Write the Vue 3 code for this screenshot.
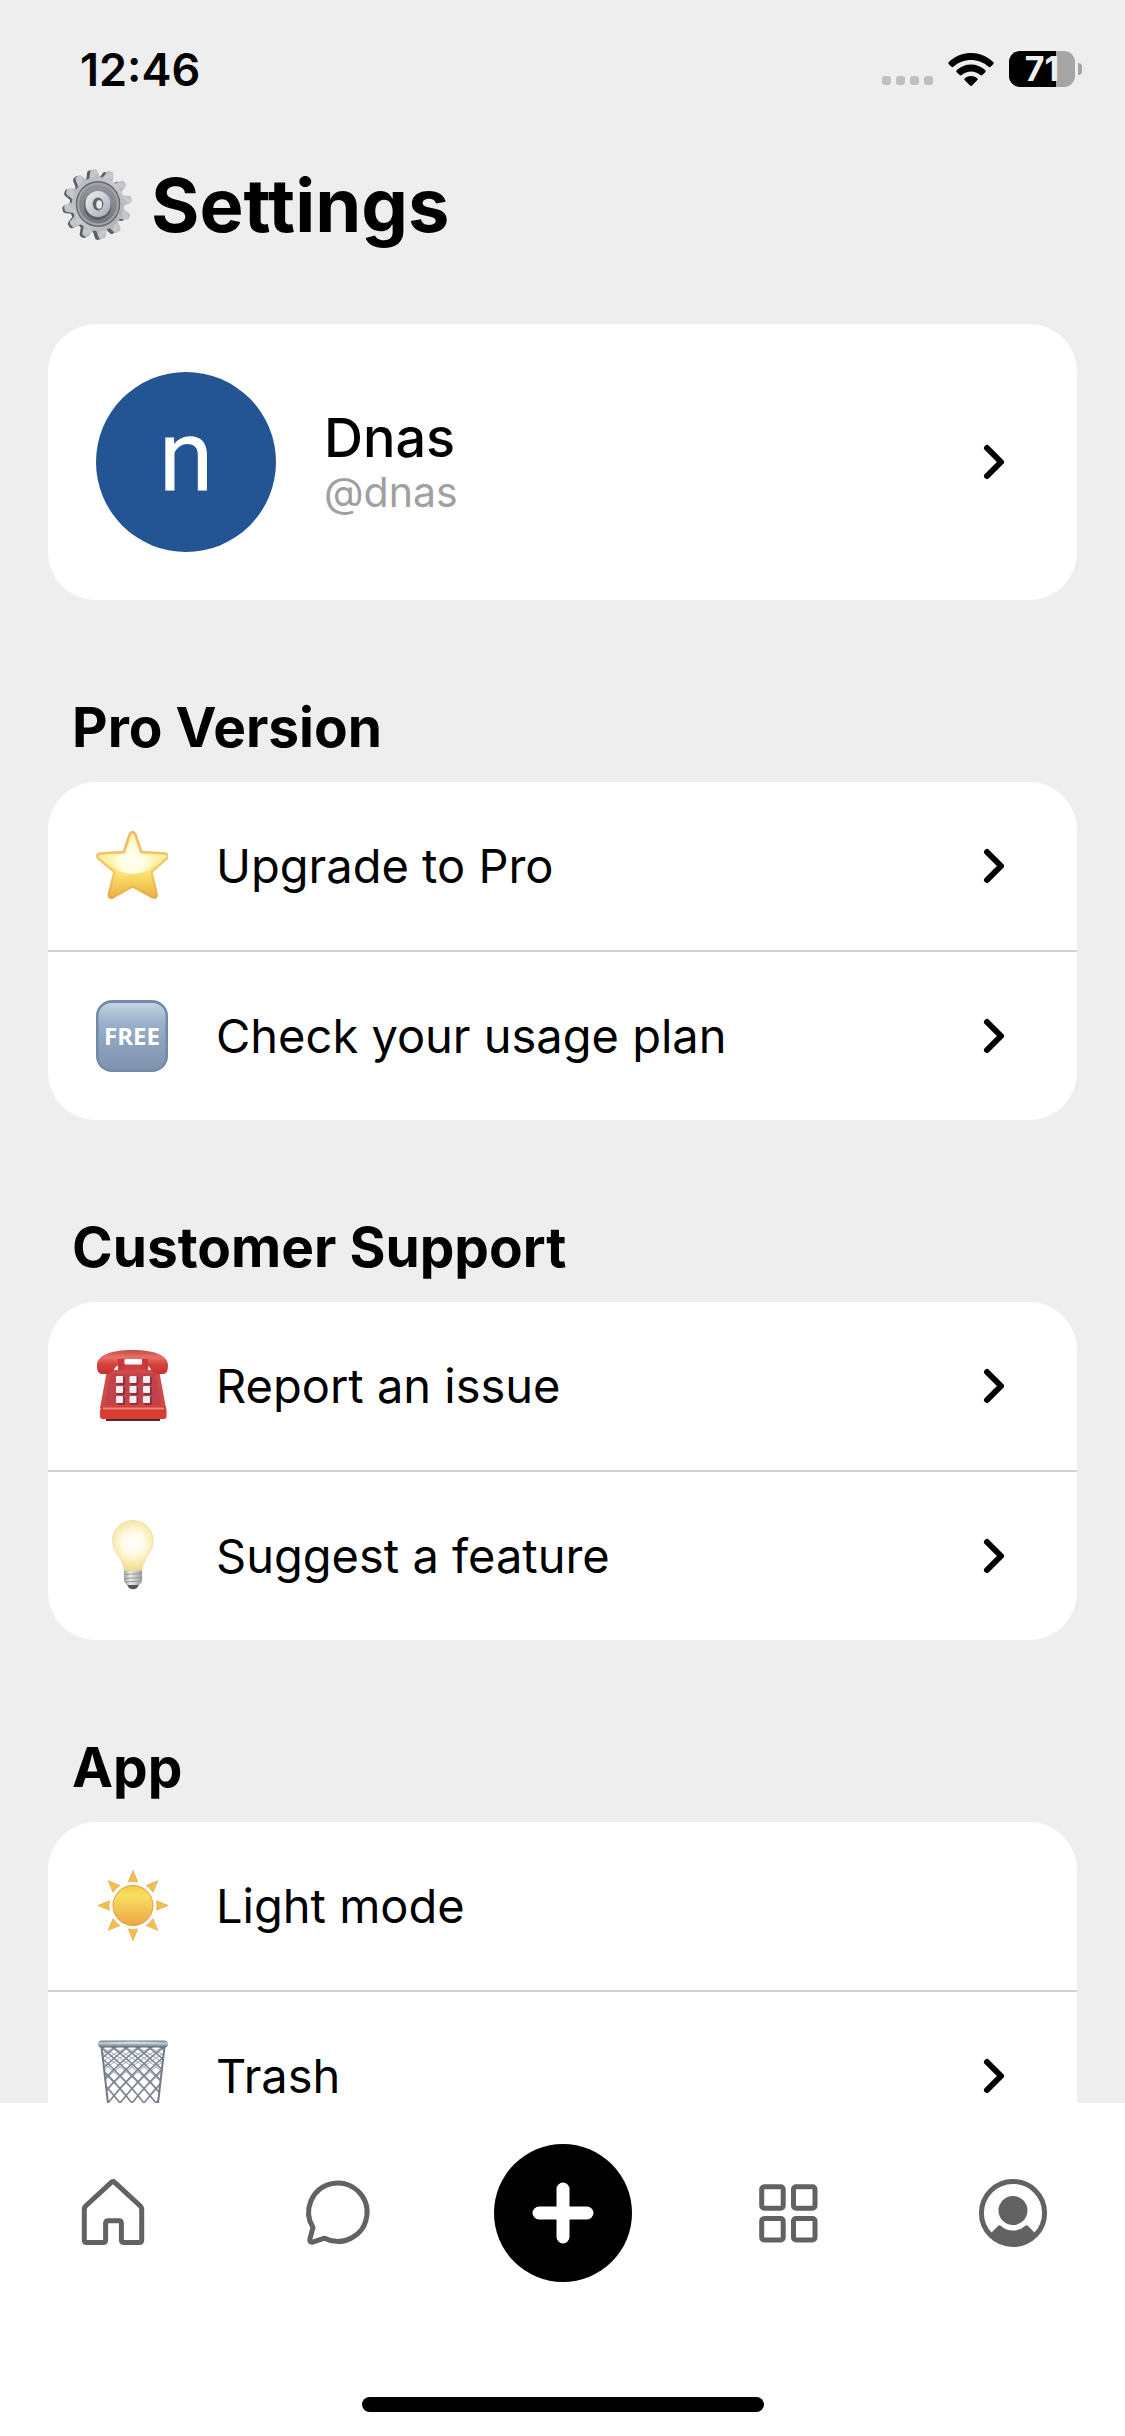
<template>
  <div class="screen">
    <!-- status bar -->
    <header class="status-bar">
      <time class="clock">12:46</time>
      <div class="status-icons">
        <div class="signal">
          <span v-for="n in 4" :key="n" class="signal-dot"></span>
        </div>
        <svg class="wifi" viewBox="0 0 46 33" aria-label="Wi-Fi">
          <path d="M0.8 11.2Q-0.3 10 0.9 8.9C13-3 33-3 45.1 8.9Q46.3 10 45.2 11.2L42.6 13.8Q41.6 14.7 40.6 13.8C31 4.7 15 4.7 5.4 13.8Q4.4 14.7 3.4 13.8Z" />
          <path d="M8.7 19.2Q7.7 18.1 8.8 17.1C16.5 9.5 29.5 9.5 37.2 17.1Q38.3 18.1 37.3 19.2L34.4 22Q33.4 22.9 32.3 22C27 17.2 19 17.2 13.7 22Q12.6 22.9 11.6 22Z" />
          <path d="M16.8 27.3Q15.7 26.2 16.9 25.2C20.4 22.3 25.6 22.3 29.1 25.2Q30.3 26.2 29.2 27.3L24 32.5Q23 33.4 22 32.5Z" />
        </svg>
        <div class="battery">
          <span class="battery-body">{{ battery }}</span>
          <span class="battery-cap"></span>
        </div>
      </div>
    </header>

    <!-- content -->
    <main class="content">
      <div class="page-title">
        <svg class="emoji" viewBox="0 0 72 72" aria-hidden="true">
          <defs>
            <linearGradient id="gearFace" x1="0" y1="0" x2="1" y2="1">
              <stop offset="0" stop-color="#aeb6c0" />
              <stop offset="0.5" stop-color="#c9cacd" />
              <stop offset="1" stop-color="#a9aaae" />
            </linearGradient>
            <linearGradient id="gearDish" x1="0" y1="0" x2="0" y2="1">
              <stop offset="0" stop-color="#92969c" />
              <stop offset="1" stop-color="#75777b" />
            </linearGradient>
            <linearGradient id="gearHub" x1="0" y1="0" x2="1" y2="1">
              <stop offset="0" stop-color="#f0f2f6" />
              <stop offset="1" stop-color="#a2a8b3" />
            </linearGradient>
          </defs>
          <g fill="#5c5e62" transform="translate(33.5 36) scale(0.92 1)">
            <path v-for="n in 12" :key="n" :transform="`rotate(${n * 30 - 8})`" d="M-6 -24L-3.5 -33Q-3 -35 -1 -35L1.5 -35Q3.5 -35 4 -33L6 -24Z" />
            <circle r="27" />
          </g>
          <g transform="translate(37 35) scale(0.97 1)">
            <path v-for="n in 12" :key="n" fill="url(#gearFace)" :transform="`rotate(${n * 30 - 8})`" d="M-6 -24L-3.5 -33Q-3 -35 -1 -35L1.5 -35Q3.5 -35 4 -33L6 -24Z" />
            <circle r="27" fill="url(#gearFace)" />
            <circle r="23" fill="#64676c" />
            <circle r="21.5" fill="#a3a6aa" />
            <circle r="19.5" fill="url(#gearDish)" />
            <circle cx="-0.5" cy="2" r="14" fill="#5d5f63" />
            <circle r="13" fill="url(#gearHub)" />
            <ellipse rx="5.5" ry="6.5" fill="#66645f" />
            <ellipse cx="1.2" cy="0.5" rx="3" ry="4.2" fill="#e9eaec" />
          </g>
        </svg>
        <h1>Settings</h1>
      </div>

      <button type="button" class="card profile">
        <span class="avatar">n</span>
        <span class="profile-text">
          <span class="profile-name">Dnas</span>
          <span class="profile-handle">@dnas</span>
        </span>
        <svg class="chevron" viewBox="0 0 72 72" aria-hidden="true"><path d="M30 22L44 36L30 50" /></svg>
      </button>

      <section v-for="section in sections" :key="section.title" class="section">
        <h2>{{ section.title }}</h2>
        <div class="card">
          <button v-for="item in section.items" :key="item.label" type="button" class="row">
            <svg v-if="item.icon === 'star'" class="emoji" viewBox="0 0 72 72" aria-hidden="true">
              <defs>
                <linearGradient id="starFill" x1="0" y1="0" x2="0" y2="1">
                  <stop offset="0" stop-color="#fff0b8" />
                  <stop offset="0.5" stop-color="#fdf0a0" />
                  <stop offset="0.7" stop-color="#f8d964" />
                  <stop offset="1" stop-color="#eeb03f" />
                </linearGradient>
                <linearGradient id="starEdge" x1="0" y1="0" x2="0" y2="1">
                  <stop offset="0" stop-color="#eeb766" />
                  <stop offset="0.6" stop-color="#f2cc68" />
                  <stop offset="1" stop-color="#e6aa48" />
                </linearGradient>
                <radialGradient id="starGlow" gradientUnits="userSpaceOnUse" cx="36.5" cy="29" r="27">
                  <stop offset="0" stop-color="#fffff4" />
                  <stop offset="0.5" stop-color="#fffee0" />
                  <stop offset="1" stop-color="#fff8b0" stop-opacity="0" />
                </radialGradient>
              </defs>
              <path d="M33.8 4Q36.5 0 39.2 4L45.5 22L69 23.5Q74.5 25 70.5 28.5L55.5 42L60.5 63.5Q61 69.5 56 67L36.5 56.5L17.5 67Q12 69.5 13 63.5L18.5 42L2.5 28.5Q-1 25 4 23.5L27.8 22Z" fill="url(#starFill)" stroke="url(#starEdge)" stroke-width="2.5" stroke-linejoin="round" />
              <path d="M36.5 6L44 24.5L66 26.5L52 40Q36 48 21.5 40L7.5 26.5L29 24.5Z" fill="url(#starGlow)" />
            </svg>

            <svg v-else-if="item.icon === 'free'" class="emoji" viewBox="0 0 72 72" aria-hidden="true">
              <defs>
                <linearGradient id="freeFill" x1="0" y1="0" x2="0" y2="1">
                  <stop offset="0" stop-color="#c3d4e4" />
                  <stop offset="0.3" stop-color="#98b0c9" />
                  <stop offset="1" stop-color="#7e92ad" />
                </linearGradient>
              </defs>
              <rect width="72" height="72" rx="16" fill="#7389a5" />
              <rect x="2.5" y="3" width="67" height="67" rx="13" fill="url(#freeFill)" />
              <text x="36" y="45" class="free-text">FREE</text>
            </svg>

            <svg v-else-if="item.icon === 'phone'" class="emoji" viewBox="0 0 72 72" aria-hidden="true">
              <defs>
                <linearGradient id="phoneTop" x1="0" y1="0" x2="0" y2="1">
                  <stop offset="0" stop-color="#c04a46" />
                  <stop offset="0.3" stop-color="#e8716a" />
                  <stop offset="0.6" stop-color="#d8403a" />
                  <stop offset="1" stop-color="#c43331" />
                </linearGradient>
              </defs>
              <path d="M10 67H64V71H10Z" fill="#50292c" />
              <path d="M14 20H60Q63 20 63.5 23L70 58H4L10.5 23Q11 20 14 20Z" fill="#d04a4a" />
              <path d="M15 23.5H59.5L65.5 55H8.5Z" fill="#c2424b" />
              <path d="M6 56H69Q71 58 70.5 67Q70 69 68 69H6.5Q4 69 4 66Q3.5 58 6 56Z" fill="#da3c34" />
              <path d="M7 58.5H68" stroke="#ee837a" stroke-width="2" />
              <path d="M22 7H52V20H22Z" fill="#cc4041" />
              <path d="M1 15C1 5 16 0 36.5 0S72 5 72 15C72 20 71 24 67 24H61C55 24 55 15 49 15H24C18 15 18 24 12 24H6C2 24 1 20 1 15Z" fill="url(#phoneTop)" />
              <path d="M22 9H28V19H22ZM46 9H52V19H46Z" fill="#c9373a" />
              <rect x="28.5" y="9" width="17.5" height="5.5" rx="1.5" fill="#fff" />
              <g v-for="y in [26, 36, 46]" :key="y">
                <rect v-for="x in [20, 33.5, 47]" :key="x" :x="x + 1" :y="y + 1" width="8" height="8" rx="1" fill="#8c323d" />
                <rect v-for="x in [20, 33.5, 47]" :key="x + 'k'" :x="x" :y="y" width="7" height="7" rx="1" fill="#f5eef1" />
              </g>
            </svg>

            <svg v-else-if="item.icon === 'bulb'" class="emoji" viewBox="0 0 72 72" aria-hidden="true">
              <defs>
                <radialGradient id="bulbFill" gradientUnits="userSpaceOnUse" cx="37" cy="23" r="27">
                  <stop offset="0" stop-color="#ffffff" />
                  <stop offset="0.4" stop-color="#fffbe8" />
                  <stop offset="0.75" stop-color="#f8eab0" />
                  <stop offset="1" stop-color="#efdc95" />
                </radialGradient>
                <linearGradient id="bulbBase" x1="0" y1="0" x2="1" y2="0">
                  <stop offset="0" stop-color="#a2a2a2" />
                  <stop offset="0.35" stop-color="#ececec" />
                  <stop offset="1" stop-color="#9c9c9c" />
                </linearGradient>
              </defs>
              <path d="M30 63H44L41 68Q37 70.5 33 68Z" fill="#555" />
              <path d="M28 50H46V61Q45 65 41 65H33Q29 65 28 61Z" fill="url(#bulbBase)" />
              <path d="M28 54.5L46 53.5M28 58.5L46 57.5M29 62L45 61" stroke="#999" stroke-width="1" />
              <path d="M36.7 0.5C48.5 0.5 57.2 9.5 57.2 20.5C57.2 32 47 38 46 50Q37 52 28 50C27 38 16.5 32 16.5 20.5C16.5 9.5 25 0.5 36.7 0.5Z" fill="url(#bulbFill)" stroke="#ecd98c" stroke-width="0.7" />
            </svg>

            <svg v-else-if="item.icon === 'sun'" class="emoji" viewBox="0 0 72 72" aria-hidden="true">
              <defs>
                <linearGradient id="sunFill" x1="0" y1="0" x2="0" y2="1">
                  <stop offset="0" stop-color="#f5cb47" />
                  <stop offset="0.25" stop-color="#fade62" />
                  <stop offset="1" stop-color="#eda644" />
                </linearGradient>
              </defs>
              <path v-for="n in 8" :key="n" d="M-4.7 -23.5L0 -35L4.7 -23.5Q0 -24.8 -4.7 -23.5Z" :transform="`translate(37 35.5) rotate(${n * 45})`" fill="#f2c04a" stroke="#e5ad50" stroke-width="0.8" />
              <circle cx="37" cy="35.5" r="20" fill="url(#sunFill)" stroke="#e59a3f" stroke-width="1" />
            </svg>

            <svg v-else class="emoji" viewBox="0 0 72 72" aria-hidden="true">
              <defs>
                <clipPath id="binShape"><path d="M5 6H69L61 72H13Z" /></clipPath>
                <linearGradient id="binRim" x1="0" y1="0" x2="0" y2="1">
                  <stop offset="0" stop-color="#737c87" />
                  <stop offset="0.4" stop-color="#bdcedb" />
                  <stop offset="1" stop-color="#5f656e" />
                </linearGradient>
              </defs>
              <g clip-path="url(#binShape)" fill="none">
                <!-- back mesh -->
                <g stroke="#b4bccb" stroke-width="1.3">
                  <path v-for="n in 14" :key="'a' + n" :d="`M${n * 12 - 98} 4Q${n * 12 - 46} 26 ${n * 12 - 6} 88`" />
                  <path v-for="n in 14" :key="'b' + n" :d="`M${n * 12 + 2} 4Q${n * 12 - 50} 26 ${n * 12 - 90} 88`" />
                </g>
                <!-- front mesh -->
                <g stroke="#7d838e" stroke-width="1.5">
                  <path v-for="n in 14" :key="'c' + n" :d="`M${n * 12 - 92} -2Q${n * 12 - 40} 34 ${n * 12 - 4} 92`" />
                  <path v-for="n in 14" :key="'d' + n" :d="`M${n * 12 - 4} -2Q${n * 12 - 56} 34 ${n * 12 - 92} 92`" />
                </g>
              </g>
              <path d="M5.5 7L13 72M68.5 7L61 72" stroke="#747b88" stroke-width="2" fill="none" />
              <rect x="2" y="0.5" width="70" height="7" rx="3.5" fill="url(#binRim)" />
              <path d="M6 3Q37 0 68 3Q37 5 6 3Z" fill="#c5d8e6" />
            </svg>

            <span class="row-label">{{ item.label }}</span>
            <svg v-if="item.link" class="chevron" viewBox="0 0 72 72" aria-hidden="true"><path d="M30 22L44 36L30 50" /></svg>
          </button>
        </div>
      </section>
    </main>

    <!-- tab bar -->
    <footer class="tab-bar">
      <nav class="tabs">
        <button type="button" class="tab" aria-label="Home">
          <svg class="tab-icon" viewBox="0 0 72 72">
            <path d="M7.3 32.5Q7.3 30.5 8.7 29L34.3 5.3Q36 3.8 37.7 5.3L63.3 29Q64.7 30.5 64.7 32.5V63Q64.7 65.5 62.2 65.5H46.9Q44.4 65.5 44.4 63V46.5Q44.4 43.8 41.9 43.8H31.1Q28.6 43.8 28.6 46.5V63Q28.6 65.5 26.1 65.5H9.8Q7.3 65.5 7.3 63Z" />
          </svg>
        </button>
        <button type="button" class="tab" aria-label="Chats">
          <svg class="tab-icon" viewBox="0 0 72 72">
            <path d="M11 50.5A29.2 29.2 0 1 1 22.6 61.2L10.5 65.2Q7.3 65.5 7.8 62.2Z" />
          </svg>
        </button>
        <button type="button" class="tab" aria-label="Add">
          <span class="add">
            <svg class="tab-icon add-icon" viewBox="0 0 72 72"><path d="M36 12V60M12 36H60" /></svg>
          </span>
        </button>
        <button type="button" class="tab" aria-label="Spaces">
          <svg class="tab-icon" viewBox="0 0 72 72">
            <rect x="9.7" y="9.7" width="21.5" height="21.5" rx="2.5" />
            <rect x="41.5" y="9.7" width="21.5" height="21.5" rx="2.5" />
            <rect x="9.7" y="41.5" width="21.5" height="21.5" rx="2.5" />
            <rect x="41.5" y="41.5" width="21.5" height="21.5" rx="2.5" />
          </svg>
        </button>
        <button type="button" class="tab" aria-label="Profile">
          <svg class="tab-icon" viewBox="0 0 72 72">
            <circle cx="36" cy="36" r="31.6" />
            <circle class="solid" cx="36" cy="33.5" r="14.5" />
            <path class="solid" d="M13.5 56.5L21.5 48.5Q22.7 47.6 24 49Q29 53.6 36 53.6T48 49Q49.3 47.6 50.5 48.5L58.5 56.5Q50 68 36 68T13.5 56.5Z" />
          </svg>
        </button>
      </nav>
      <div class="home-indicator"></div>
    </footer>
  </div>
</template>

<script setup>
import { ref } from 'vue'

const battery = ref(71)

const sections = [
  {
    title: 'Pro Version',
    items: [
      { icon: 'star', label: 'Upgrade to Pro', link: true },
      { icon: 'free', label: 'Check your usage plan', link: true }
    ]
  },
  {
    title: 'Customer Support',
    items: [
      { icon: 'phone', label: 'Report an issue', link: true },
      { icon: 'bulb', label: 'Suggest a feature', link: true }
    ]
  },
  {
    title: 'App',
    items: [
      { icon: 'sun', label: 'Light mode', link: false },
      { icon: 'trash', label: 'Trash', link: true }
    ]
  }
]
</script>

<style>
body {
  margin: 0;
  background: #eee;
}
</style>

<style scoped>
.screen {
  display: flex;
  flex-direction: column;
  height: 100vh;
  background: #eee;
  color: #000;
  font-family: Inter, "Liberation Sans", sans-serif;
}

button {
  border: 0;
  padding: 0;
  margin: 0;
  background: none;
  color: inherit;
  font: inherit;
  text-align: left;
  cursor: pointer;
}

/* status bar */
.status-bar {
  display: flex;
  flex: none;
  align-items: center;
  justify-content: space-between;
  height: 138px;
  padding: 0 43px 0 80px;
  box-sizing: border-box;
}

.clock {
  font-size: 45px;
  font-weight: 600;
}

.status-icons {
  display: flex;
  align-items: center;
  gap: 15px;
}

.signal {
  display: flex;
  align-self: flex-end;
  gap: 5px;
  padding-bottom: 2px;
}

.signal-dot {
  width: 9px;
  height: 9px;
  border-radius: 3px;
  background: #bfbfbf;
}

.wifi {
  width: 46px;
  height: 33px;
}

.battery {
  display: flex;
  align-items: center;
  gap: 3px;
}

.battery-body {
  width: 66px;
  height: 36px;
  border-radius: 11px;
  background: linear-gradient(90deg, #000 71%, #a5a5a5 71%);
  color: #eee;
  font-size: 34px;
  font-weight: 700;
  line-height: 36px;
  text-align: center;
}

.battery-cap {
  width: 4px;
  height: 12px;
  border-radius: 0 6px 6px 0;
  background: #a5a5a5;
}

/* content */
.content {
  flex: 1;
  min-height: 0;
  padding: 0 48px;
  overflow-y: auto;
  scrollbar-width: none;
}

.page-title {
  display: flex;
  align-items: center;
  gap: 18px;
  height: 72px;
  padding: 31px 13px 83px;
}

h1 {
  margin: 0;
  font-size: 74px;
  font-weight: 700;
  line-height: 70px;
}

.emoji {
  flex: none;
  width: 72px;
  height: 72px;
}

.card {
  border-radius: 48px;
  background: #fff;
  overflow: hidden;
}

.profile {
  display: flex;
  align-items: center;
  gap: 48px;
  width: 100%;
  padding: 48px;
}

.avatar {
  flex: none;
  width: 180px;
  height: 180px;
  border-radius: 50%;
  background: #235594;
  color: #fff;
  font-family: Roboto, sans-serif;
  font-size: 100px;
  line-height: 170px;
  text-align: center;
}

.profile-text {
  display: flex;
  flex: 1;
  flex-direction: column;
}

.profile-name {
  font-size: 54px;
  font-weight: 500;
  line-height: 60px;
}

.profile-handle {
  color: #a0a0a0;
  font-size: 41px;
  line-height: 48px;
}

.chevron {
  flex: none;
  width: 72px;
  height: 72px;
  fill: none;
  stroke: #000;
  stroke-width: 6;
  stroke-linecap: round;
  stroke-linejoin: round;
}

.section {
  padding-top: 96px;
}

h2 {
  margin: 0;
  padding: 0 24px 24px;
  font-size: 55px;
  font-weight: 700;
  line-height: 62px;
}

.row {
  display: flex;
  align-items: center;
  gap: 48px;
  width: 100%;
  padding: 48px;
}

.row + .row {
  border-top: 2px solid #d2d2d2;
}

.row-label {
  flex: 1;
  font-size: 47px;
  line-height: 46px;
}

.free-text {
  fill: #fff;
  font-family: "Open Sans", sans-serif;
  font-size: 24px;
  font-weight: 700;
  text-anchor: middle;
}

/* tab bar */
.tab-bar {
  flex: none;
  background: #fff;
  padding: 41px 0 24px;
}

.tabs {
  display: grid;
  grid-template-columns: repeat(5, 1fr);
  align-items: center;
}

.tab {
  display: flex;
  justify-content: center;
}

.tab-icon {
  width: 72px;
  height: 72px;
  fill: none;
  stroke: #626262;
  stroke-width: 5;
  stroke-linejoin: round;
}

.solid {
  fill: #626262;
  stroke: none;
}

.add {
  display: flex;
  align-items: center;
  justify-content: center;
  width: 138px;
  height: 138px;
  border-radius: 50%;
  background: #000;
}

.add-icon {
  stroke: #fff;
  stroke-width: 13;
  stroke-linecap: round;
}

.home-indicator {
  width: 402px;
  height: 15px;
  margin: 115px auto 0;
  border-radius: 8px;
  background: #000;
}
</style>
